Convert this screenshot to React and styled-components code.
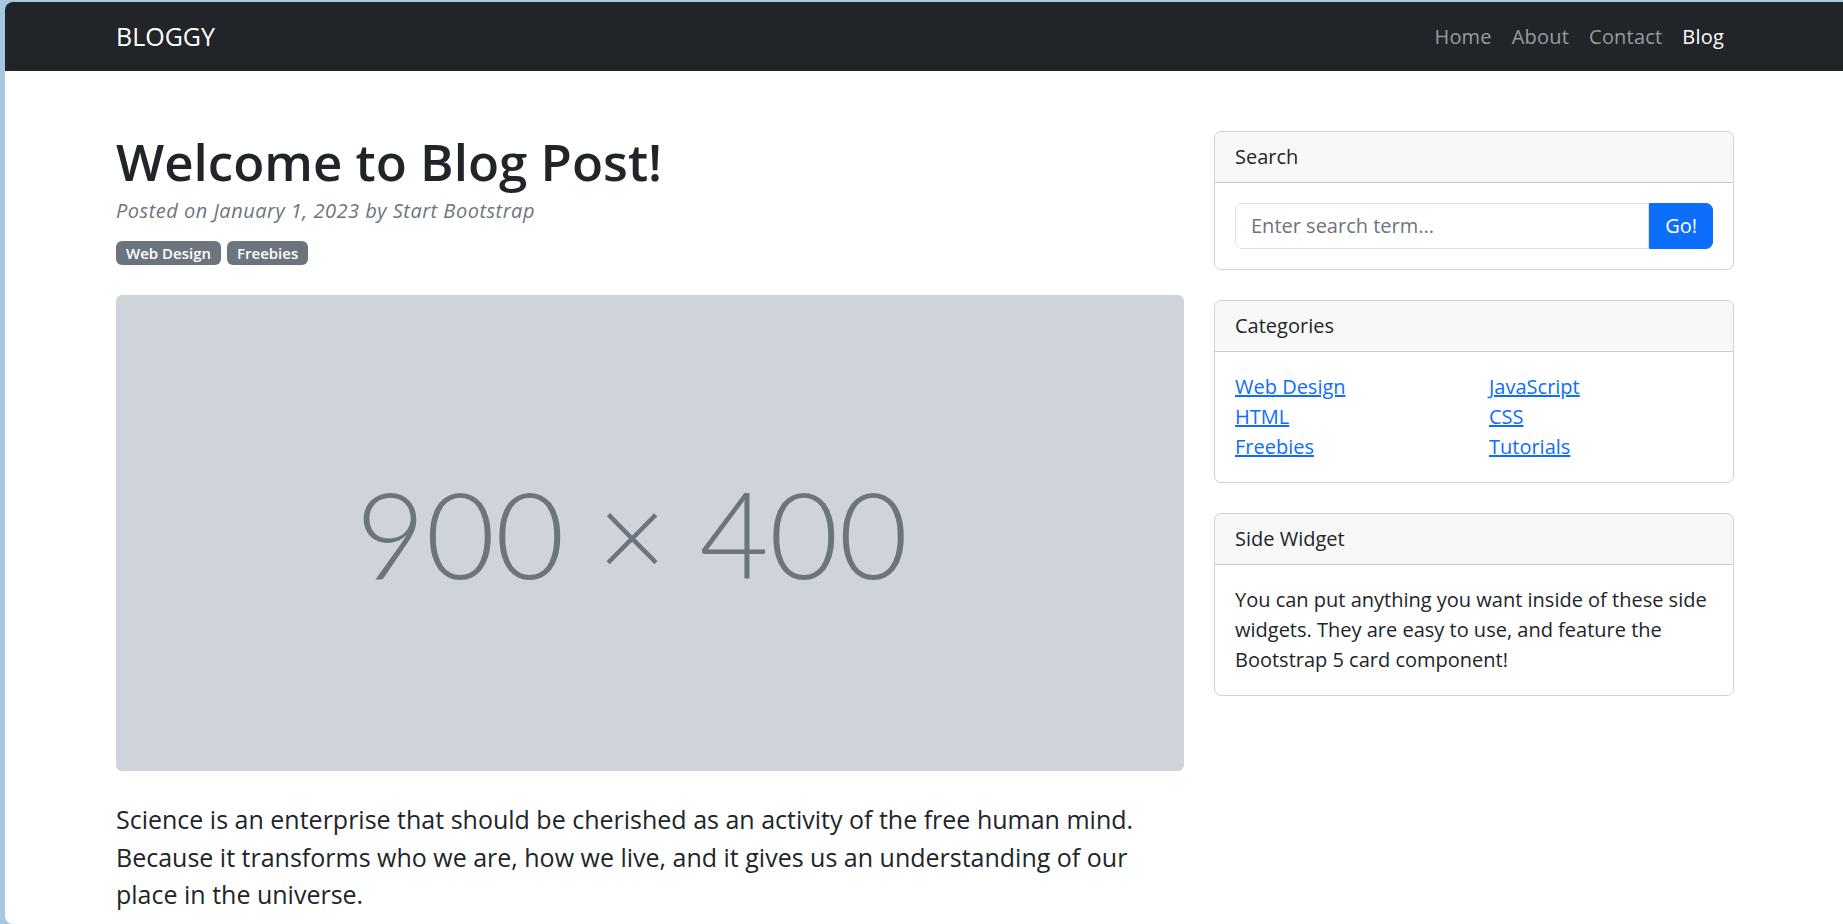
import React from 'react';
import styled, { createGlobalStyle } from 'styled-components';

const GlobalStyle = createGlobalStyle`
  * { box-sizing: border-box; }
  html, body { margin: 0; padding: 0; }
  body {
    background: #a6c8de;
    font-family: "Open Sans", "Noto Sans", sans-serif;
    font-size: 20px;
    line-height: 30px;
    color: #212529;
  }
`;

// Window frame
const Window = styled.div`
  margin: 2px 0 0 5px;
  height: 922px;
  background: #fff;
  border-radius: 8px 0 0 8px;
  overflow: hidden;
`;

const Container = styled.div`
  width: 100%;
  max-width: 1650px;
  margin: 0 auto;
  padding: 0 15px 0 17px;
`;

// Navbar
const Navbar = styled.nav`
  background: #212529;
  height: 69px;
  display: flex;
  align-items: center;
`;

const NavInner = styled(Container)`
  display: flex;
  align-items: center;
  justify-content: space-between;
`;

const Brand = styled.a`
  font-size: 25px;
  line-height: 37px;
  color: #fff;
  text-decoration: none;
`;

const NavList = styled.ul`
  display: flex;
  list-style: none;
  margin: 0;
  padding: 0;
`;

const NavLink = styled.a`
  display: block;
  padding: 10px;
  line-height: 30px;
  letter-spacing: 0.2px;
  color: ${props => (props.$active ? '#fff' : 'rgba(255, 255, 255, 0.55)')};
  text-decoration: none;
`;

// Page layout
const Main = styled(Container)`
  margin-top: 60px;
  display: grid;
  grid-template-columns: 1068px 520px;
  column-gap: 30px;
  align-items: start;
`;

const Article = styled.article``;

const PostHeader = styled.header`
  margin-bottom: 30px;
`;

const Title = styled.h1`
  margin: 0 0 5px;
  font-size: 51px;
  font-weight: 600;
  line-height: 60px;
`;

const Meta = styled.div`
  margin-bottom: 10px;
  font-style: italic;
  letter-spacing: 0.5px;
  color: #6c757d;
`;

const Badges = styled.div`
  display: flex;
  gap: 6px;
  padding-top: 5px;
`;

const Badge = styled.a`
  display: inline-block;
  padding: 4px 10px;
  font-size: 15px;
  font-weight: 600;
  line-height: 16px;
  color: #fff;
  background: #6c757d;
  border-radius: 6px;
  text-decoration: none;
`;

const Figure = styled.figure`
  margin: 0 0 30px;
`;

const Placeholder = styled.div`
  height: 476px;
  display: flex;
  align-items: center;
  justify-content: center;
  padding-right: 36px;
  background: #ced4da;
  border-radius: 6px;
  color: #6c757d;
  font-family: Lato, sans-serif;
  font-size: 120px;
  font-weight: 300;
  line-height: 1;
`;

const Lead = styled.p`
  margin: 0 0 30px;
  font-size: 25px;
  line-height: 37.5px;
`;

// Sidebar cards
const Sidebar = styled.aside``;

const Card = styled.div`
  margin-bottom: 30px;
  border: 1px solid rgba(0, 0, 0, 0.175);
  border-radius: 7px;
  overflow: hidden;
`;

const CardHeader = styled.div`
  padding: 10px 20px;
  background: rgba(33, 37, 41, 0.03);
  border-bottom: 1px solid rgba(0, 0, 0, 0.175);
`;

const CardBody = styled.div`
  padding: 20px;
`;

const InputGroup = styled.div`
  display: flex;
`;

const SearchInput = styled.input`
  flex: 1;
  min-width: 0;
  padding: 7px 15px;
  font-family: inherit;
  font-size: 20px;
  line-height: 30px;
  color: #212529;
  border: 1px solid #dee2e6;
  border-radius: 7px 0 0 7px;
  outline: none;

  &::placeholder {
    color: #6c757d;
  }
`;

const GoButton = styled.button`
  padding: 7px 15px;
  font-family: inherit;
  font-size: 20px;
  line-height: 30px;
  color: #fff;
  background: #0d6efd;
  border: 1px solid #0d6efd;
  border-radius: 0 7px 7px 0;
`;

const CategoryGrid = styled.div`
  display: grid;
  grid-template-columns: 1fr 1fr;
  column-gap: 30px;
`;

const CategoryList = styled.ul`
  list-style: none;
  margin: 0;
  padding: 0;
`;

const CategoryLink = styled.a`
  color: #0d6efd;
  text-decoration: underline;
`;

const categories = [
  ['Web Design', 'HTML', 'Freebies'],
  ['JavaScript', 'CSS', 'Tutorials'],
];

const navItems = ['Home', 'About', 'Contact', 'Blog'];

export default function App() {
  return (
    <>
      <GlobalStyle />
      <Window>
        <Navbar>
          <NavInner>
            <Brand href="#">BLOGGY</Brand>
            <NavList>
              {navItems.map(item => (
                <li key={item}>
                  <NavLink href="#" $active={item === 'Blog'}>{item}</NavLink>
                </li>
              ))}
            </NavList>
          </NavInner>
        </Navbar>

        <Main>
          <Article>
            <PostHeader>
              <Title>Welcome to Blog Post!</Title>
              <Meta>Posted on January 1, 2023 by Start Bootstrap</Meta>
              <Badges>
                <Badge href="#">Web Design</Badge>
                <Badge href="#">Freebies</Badge>
              </Badges>
            </PostHeader>
            <Figure>
              <Placeholder>900 × 400</Placeholder>
            </Figure>
            <Lead>
              Science is an enterprise that should be cherished as an activity of the free human mind.
              Because it transforms who we are, how we live, and it gives us an understanding of our
              place in the universe.
            </Lead>
          </Article>

          <Sidebar>
            <Card>
              <CardHeader>Search</CardHeader>
              <CardBody>
                <InputGroup>
                  <SearchInput type="text" placeholder="Enter search term..." />
                  <GoButton type="button">Go!</GoButton>
                </InputGroup>
              </CardBody>
            </Card>

            <Card>
              <CardHeader>Categories</CardHeader>
              <CardBody>
                <CategoryGrid>
                  {categories.map((column, i) => (
                    <CategoryList key={i}>
                      {column.map(name => (
                        <li key={name}>
                          <CategoryLink href="#">{name}</CategoryLink>
                        </li>
                      ))}
                    </CategoryList>
                  ))}
                </CategoryGrid>
              </CardBody>
            </Card>

            <Card>
              <CardHeader>Side Widget</CardHeader>
              <CardBody>
                You can put anything you want inside of these side widgets. They are easy to use,
                and feature the Bootstrap 5 card component!
              </CardBody>
            </Card>
          </Sidebar>
        </Main>
      </Window>
    </>
  );
}
